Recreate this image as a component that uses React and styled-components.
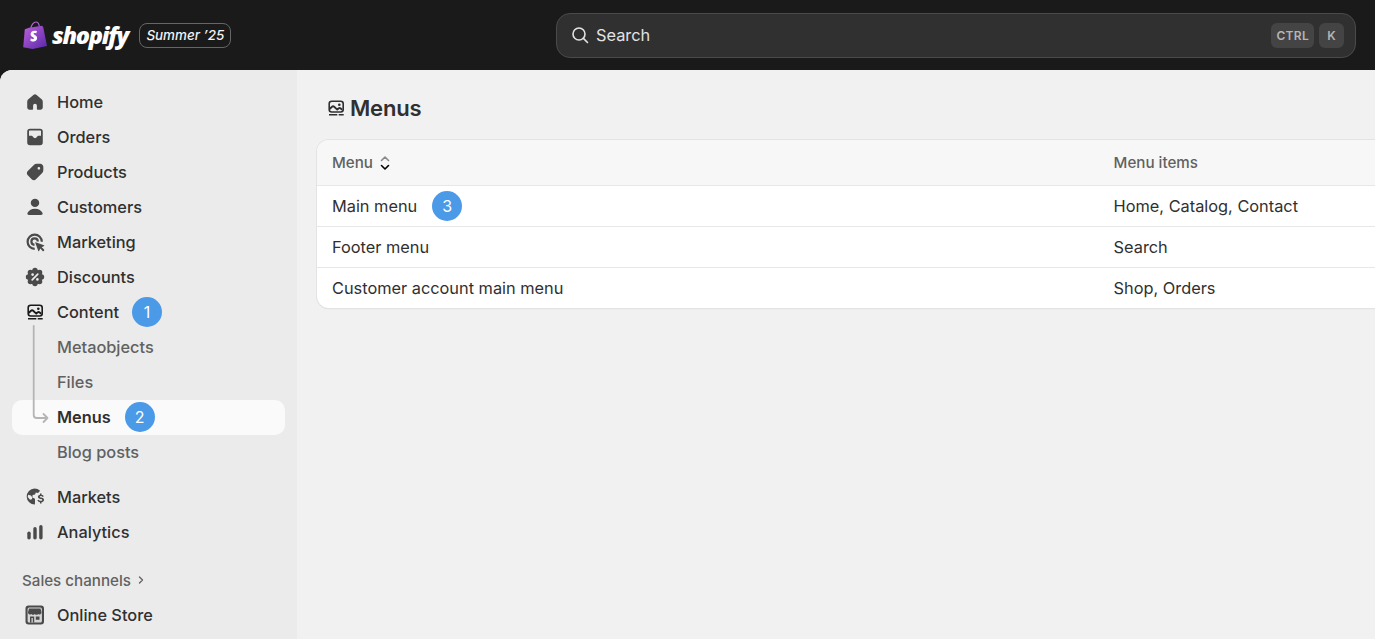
import React from 'react';
import styled, { createGlobalStyle } from 'styled-components';

const GlobalStyle = createGlobalStyle`
  html, body {
    margin: 0;
    padding: 0;
    height: 100%;
    overflow: hidden;
    background: #1a1a1a;
    font-family: Inter, "Liberation Sans", sans-serif;
    color: #303030;
  }
  #root { height: 100%; }
`;

const Page = styled.div`
  width: 1375px;
  height: 639px;
  display: flex;
  flex-direction: column;
  overflow: hidden;
`;

const TopBar = styled.header`
  height: 70px;
  flex: none;
  display: grid;
  grid-template-columns: 556px 800px;
  align-items: center;
  background: #1a1a1a;
`;

const Brand = styled.div`
  display: flex;
  align-items: center;
  padding-left: 23px;
`;

const Wordmark = styled.span`
  margin-left: 4px;
  font-family: "Open Sans", sans-serif;
  font-style: italic;
  font-weight: 800;
  font-size: 23.5px;
  letter-spacing: -1.3px;
  color: #fff;
`;

const EditionTag = styled.span`
  margin-left: 11px;
  height: 23px;
  padding: 0 6px 0 6.500px;
  display: flex;
  align-items: center;
  border: 1px solid #666;
  border-radius: 8px;
  font-size: 13.4px;
  font-style: italic;
  font-weight: 500;
  color: #f3f3f3;
`;

const SearchBox = styled.div`
  height: 45px;
  display: flex;
  align-items: center;
  padding: 0 11px 0 13px;
  box-sizing: border-box;
  background: #303030;
  border: 1px solid #4a4a4a;
  border-radius: 14px;
  color: #e3e3e3;
  font-size: 16.33px;
`;

const SearchLabel = styled.span`
  margin-left: 6px;
  flex: 1;
`;

const Key = styled.kbd`
  height: 25px;
  min-width: 25px;
  margin-left: 5px;
  padding: 0 5px;
  box-sizing: border-box;
  display: flex;
  align-items: center;
  justify-content: center;
  background: #444;
  border-radius: 6px;
  font-family: Inter, sans-serif;
  font-size: 12px;
  font-weight: 600;
  letter-spacing: 0.3px;
  color: #b5b5b5;
`;

const Body = styled.div`
  flex: 1;
  min-height: 0;
  display: flex;
  border-radius: 12px 0 0 0;
  overflow: hidden;
  background: #f1f1f1;
`;

const Sidebar = styled.nav`
  width: 297px;
  flex: none;
  box-sizing: border-box;
  padding: 15px 12px 0;
  background: #ebebeb;
`;

const NavRow = styled.div`
  height: 35px;
  display: flex;
  align-items: center;
  padding-left: 13px;
  width: 273px;
  box-sizing: border-box;
  border-radius: 10px;
  padding-bottom: 1px;
  font-size: 16.33px;
  font-weight: 450;
  color: #303030;
  background: ${p => (p.$active ? '#fafafa' : 'transparent')};
`;

const SubRow = styled(NavRow)`
  padding-left: 45px;
  color: ${p => (p.$active ? '#303030' : '#616161')};
  font-weight: ${p => (p.$active ? 600 : 450)};
`;

const NavIcon = styled.span`
  width: 20px;
  height: 20px;
  margin-right: ${p => p.$gap ?? 12}px;
  flex: none;
  display: flex;
  color: ${p => p.$color || '#4a4a4a'};

  svg {
    overflow: visible;
  }
`;

const SubGroup = styled.div`
  position: relative;
`;

const TreeLine = styled.svg`
  position: absolute;
  left: 20px;
  top: -5px;
  width: 20px;
  height: 100px;
`;

const Step = styled.span`
  width: 30px;
  height: 30px;
  margin-left: ${p => p.$gap || 14}px;
  flex: none;
  display: flex;
  align-items: center;
  justify-content: center;
  border-radius: 50%;
  background: #4a9ae8;
  color: #fff;
  font-size: 16px;
  font-weight: 400;
`;

const NavSpacer = styled.div`
  height: 10px;
`;

const SectionLabel = styled.div`
  height: 48px;
  padding: 12px 0 0 10px;
  box-sizing: border-box;
  display: flex;
  align-items: center;
  gap: 4px;
  font-size: 15.17px;
  font-weight: 450;
  color: #616161;
`;

const Main = styled.main`
  flex: 1;
  min-width: 0;
  padding: 0 0 0 20px;
  overflow: hidden;
`;

const Title = styled.h1`
  margin: 0;
  height: 70px;
  padding: 5px 0 0 9px;
  box-sizing: border-box;
  display: flex;
  align-items: center;
  gap: 4px;
  font-size: 22px;
  font-weight: 600;
  letter-spacing: -0.2px;
  color: #303030;
`;

const TableCard = styled.div`
  width: 1100px;
  background: #fff;
  border-radius: 12px;
  overflow: hidden;
  box-shadow: 0 0 0 1px #e3e3e3, 0 1px 1px rgba(0, 0, 0, 0.12);
`;

const Row = styled.div`
  display: grid;
  grid-template-columns: 781.6px 1fr;
  align-items: center;
  height: 41px;
  box-sizing: border-box;
  padding-left: 15px;
  border-top: 1px solid #e7e7e7;
  font-size: 16.33px;
  color: #303030;

  &:first-child {
    border-top: 0;
  }
`;

const HeadRow = styled(Row)`
  height: 45px;
  background: #f7f7f7;
  font-size: 15.17px;
  font-weight: 550;
  color: #616161;
`;

const Cell = styled.div`
  display: flex;
  align-items: center;
`;

const SortIcon = styled.svg`
  width: 14px;
  height: 18px;
  margin-left: 5px;
`;

const fill = { width: 20, height: 20, viewBox: '1 1 18 18', fill: 'currentColor' };
const plain = { width: 20, height: 20, viewBox: '0 0 20 20', fill: 'currentColor' };
const BG = '#ebebeb';

const HomeIcon = () => (
  <svg {...fill}>
    <path d="M8.8 3.500a1.900 1.900 0 0 1 2.400 0l4.500 3.700c.8.600 1.300 1.500 1.300 2.500v5.300c0 1.100-.9 2-2 2h-2.300c-.6 0-1-.4-1-1v-2.700a1.700 1.700 0 0 0-3.400 0V16c0 .6-.4 1-1 1H5c-1.100 0-2-.9-2-2V9.700c0-1 .5-1.900 1.300-2.500z" />
  </svg>
);

const OrdersIcon = () => (
  <svg {...fill}>
    <path fillRule="evenodd" d="M5.500 2.500h9A2.500 2.500 0 0 1 17 5v10a2.500 2.500 0 0 1-2.500 2.500h-9A2.500 2.500 0 0 1 3 15V5a2.500 2.500 0 0 1 2.500-2.500m0 1.600c-.5 0-.9.400-.9.900v3.800h1.900c1 0 1.500.5 1.900 1.300.3.600.9 1 1.600 1s1.300-.4 1.600-1c.4-.8.900-1.300 1.900-1.300h1.900V5c0-.5-.4-.9-.9-.9z" />
  </svg>
);

const ProductsIcon = () => (
  <svg {...fill}>
    <path fillRule="evenodd" d="M11.500 2.500h3.200c1.500 0 2.800 1.300 2.800 2.800v3.200c0 .9-.4 1.700-1 2.300l-5.600 5.700c-1.100 1.100-2.800 1.100-3.900 0l-3.500-3.500c-1.100-1.100-1.100-2.800 0-3.900l5.700-5.600c.6-.6 1.400-1 2.300-1m2 3a1.200 1.200 0 1 0 0 2.400 1.200 1.200 0 0 0 0-2.400" />
  </svg>
);

const CustomersIcon = () => (
  <svg {...fill}>
    <circle cx="10" cy="6.300" r="3.800" />
    <path d="M10 11.500c-3.400 0-6 1.800-6.800 4-.3 1 .4 1.800 1.400 1.800h10.800c1 0 1.700-.8 1.400-1.800-.8-2.200-3.400-4-6.800-4" />
  </svg>
);

const MarketingIcon = () => (
  <svg {...plain}>
    <g fill="none" stroke="currentColor" strokeWidth="2.200">
      <path d="M9.700 16.800A7.100 7.100 0 1 1 16.800 9.700" />
      <path d="M9.500 12.800A3.200 3.200 0 1 1 12.800 9.500" />
    </g>
    <path d="M10.600 10.200c-.3-.1-.5.100-.4.400l3.100 8.300c.1.400.6.400.8.100l1.200-2.400 2.300 2.400c.3.300.8.300 1.100 0l.4-.4c.3-.3.300-.8 0-1.100l-2.400-2.300 2.400-1.200c.3-.2.300-.7-.1-.8z" />
  </svg>
);

const DiscountsIcon = () => (
  <svg {...plain}>
    <circle cx="10" cy="10" r="7.300" />
    {[0, 45, 90, 135, 180, 225, 270, 315].map(a => (
      <circle
        key={a}
        cx={10 + 6.5 * Math.cos((a * Math.PI) / 180)}
        cy={10 + 6.5 * Math.sin((a * Math.PI) / 180)}
        r="2.700"
      />
    ))}
    <path d="M12.800 7.200 7.200 12.800" stroke={BG} strokeWidth="1.700" strokeLinecap="round" />
    <circle cx="7.600" cy="7.600" r="1.300" fill={BG} />
    <circle cx="12.400" cy="12.400" r="1.300" fill={BG} />
  </svg>
);

const ContentIcon = ({ bg = BG }) => (
  <svg {...plain}>
    <rect x="3.200" y="3.200" width="14" height="10.800" rx="2.500" fill={bg} stroke="currentColor" strokeWidth="1.600" />
    <path d="M3.600 11 6 8.800c.7-.6 1.500-.6 2.200 0l3 2.800 1.300-1.100c.7-.6 1.500-.6 2.200 0l1.500 1.300" fill="none" stroke="currentColor" strokeWidth="1.900" />
    <circle cx="13.300" cy="6.700" r="1.300" />
    <path d="M3 16.100h8.300v1.500H3zM12.700 16.100h5v1.500h-5z" />
  </svg>
);

const MarketsIcon = () => (
  <svg {...plain}>
    <path
      fillRule="evenodd"
      d="M9.500 1.500a8 8 0 0 1 5.600 2.300l-2 2.200-2.300-.5-.8 2-2.400.4-.2 2.500 2.600 1.300v3l-.1 2.800A8 8 0 0 1 9.500 1.500M3.200 7.800l-.5 2.300 2.300 2.600 1.900-.5.300-2-1.300-1.800z"
    />
    <path d="M15 6.500h1.500v1.200c1.100.1 2 .7 2.300 1.600l-1.300.7c-.2-.6-.8-.9-1.500-.9-.8 0-1.200.3-1.200.7 0 .5.400.6 1.400.8 1.500.3 2.800.8 2.800 2.300 0 1.200-1 2.100-2.500 2.300v1.300H15v-1.300c-1.300-.1-2.200-.8-2.600-1.900l1.400-.6c.2.700.9 1.100 1.900 1.100.9 0 1.500-.3 1.500-.9s-.6-.7-1.700-.9c-1.400-.3-2.600-.8-2.600-2.200 0-1.200.9-1.900 2.100-2.100z" />
  </svg>
);

const AnalyticsIcon = () => (
  <svg {...plain}>
    <rect x="2.300" y="9.500" width="3.400" height="8" rx="1.700" />
    <rect x="8.300" y="5" width="3.400" height="12.500" rx="1.700" />
    <rect x="14.200" y="3" width="3.400" height="14.500" rx="1.700" />
  </svg>
);

const StoreIcon = () => (
  <svg {...plain}>
    <rect x=".5" y=".5" width="18.500" height="19" rx="3" />
    <rect x="2.600" y="2.600" width="14.300" height="14.800" rx="1.500" fill="#d6d6d6" />
    <path d="M4 3.600h11.500l1 3.700a2 2 0 0 1-3.300 1.600 2.400 2.400 0 0 1-3.400 0 2.400 2.400 0 0 1-3.400 0A2 2 0 0 1 3 7.300z" />
    <path d="M5 11.500h4.200v5.900H5zM10.800 11.500h3.700v3.300h-3.700z" />
    <path d="M6.500 13h1.300v4.400H6.500z" fill="#d6d6d6" />
  </svg>
);

const SearchIcon = () => (
  <svg width="20" height="20" viewBox="0 0 20 20" fill="none" stroke="currentColor" strokeWidth="1.600" strokeLinecap="round">
    <circle cx="9" cy="9" r="6" />
    <path d="M13.400 13.400 17.500 17.500" />
  </svg>
);

const ShopifyBag = () => (
  <svg width="25" height="28" viewBox="0 0 25 28">
    <defs>
      <linearGradient id="bag" x1="0" y1="0" x2="1" y2="1">
        <stop offset="0" stopColor="#c060dc" />
        <stop offset="1" stopColor="#5528a8" />
      </linearGradient>
    </defs>
    <path d="M8 7c.4-3 2.500-6 5-6 2 0 3 2 3.300 4.500" fill="none" stroke="#b066d0" strokeWidth="1.200" />
    <path d="M1.800 8.200 6 6.800l13-2 1.200 1.300 3.800 19-14.500 2.900-9.300-1.700z" fill="url(#bag)" />
    <path d="M14 10.300c-.8-.4-1.700-.5-2.400-.5-2.600 0-4 1.700-4 3.400 0 2.700 3.400 2.800 3.400 4.100 0 .5-.4.800-1 .8-1 0-2.100-.8-2.100-.8l-.6 2.100s1 1.200 3.200 1.200c2 0 3.600-1.400 3.600-3.500 0-2.900-3.500-3.200-3.500-4.300 0-.3.200-.7 1-.7.800 0 1.500.3 1.500.3z" fill="#fff" />
  </svg>
);

const TOP_ITEMS = [
  { label: 'Home', icon: HomeIcon },
  { label: 'Orders', icon: OrdersIcon },
  { label: 'Products', icon: ProductsIcon },
  { label: 'Customers', icon: CustomersIcon },
  { label: 'Marketing', icon: MarketingIcon },
  { label: 'Discounts', icon: DiscountsIcon },
];

const MENUS = [
  { name: 'Main menu', items: 'Home, Catalog, Contact', step: 3 },
  { name: 'Footer menu', items: 'Search' },
  { name: 'Customer account main menu', items: 'Shop, Orders' },
];

function App() {
  return (
    <Page>
      <GlobalStyle />
      <TopBar>
        <Brand>
          <ShopifyBag />
          <Wordmark>shopify</Wordmark>
          <EditionTag>Summer ’25</EditionTag>
        </Brand>
        <SearchBox>
          <SearchIcon />
          <SearchLabel>Search</SearchLabel>
          <Key>CTRL</Key>
          <Key>K</Key>
        </SearchBox>
      </TopBar>

      <Body>
        <Sidebar>
          {TOP_ITEMS.map(item => (
            <NavRow key={item.label}>
              <NavIcon><item.icon /></NavIcon>
              {item.label}
            </NavRow>
          ))}
          <NavRow>
            <NavIcon $color="#1a1a1a"><ContentIcon /></NavIcon>
            Content
            <Step $gap={13}>1</Step>
          </NavRow>
          <SubGroup>
            <TreeLine viewBox="0 0 20 100" fill="none" stroke="#b5b5b5" strokeWidth="1.800" strokeLinecap="round" strokeLinejoin="round">
              <path d="M1.700 1V90c0 2 1 3 3 3H15.500M11.500 89 15.500 93l-4 4" />
            </TreeLine>
            <SubRow>Metaobjects</SubRow>
            <SubRow>Files</SubRow>
            <SubRow $active>
              Menus
              <Step>2</Step>
            </SubRow>
            <SubRow>Blog posts</SubRow>
          </SubGroup>
          <NavSpacer />
          <NavRow>
            <NavIcon><MarketsIcon /></NavIcon>
            Markets
          </NavRow>
          <NavRow>
            <NavIcon><AnalyticsIcon /></NavIcon>
            Analytics
          </NavRow>
          <SectionLabel>
            Sales channels
            <svg width="12" height="12" viewBox="0 0 12 12" fill="none" stroke="#616161" strokeWidth="1.300" strokeLinecap="round" strokeLinejoin="round">
              <path d="M4.500 3 7.500 6l-3 3" />
            </svg>
          </SectionLabel>
          <NavRow>
            <NavIcon><StoreIcon /></NavIcon>
            Online Store
          </NavRow>
        </Sidebar>

        <Main>
          <Title>
            <NavIcon $color="#303030" $gap={0}><ContentIcon bg="#f1f1f1" /></NavIcon>
            Menus
          </Title>
          <TableCard>
            <HeadRow>
              <Cell>
                Menu
                <SortIcon viewBox="0 0 14 18" fill="none" strokeWidth="1.600" strokeLinecap="round" strokeLinejoin="round">
                  <path d="M3.500 6.500 7 3l3.500 3.500" stroke="#8a8a8a" />
                  <path d="M3.500 11.500 7 15l3.500-3.500" stroke="#000" />
                </SortIcon>
              </Cell>
              <Cell>Menu items</Cell>
            </HeadRow>
            {MENUS.map(menu => (
              <Row key={menu.name}>
                <Cell>
                  {menu.name}
                  {menu.step && <Step $gap={15}>{menu.step}</Step>}
                </Cell>
                <Cell>{menu.items}</Cell>
              </Row>
            ))}
          </TableCard>
        </Main>
      </Body>
    </Page>
  );
}

export default App;
